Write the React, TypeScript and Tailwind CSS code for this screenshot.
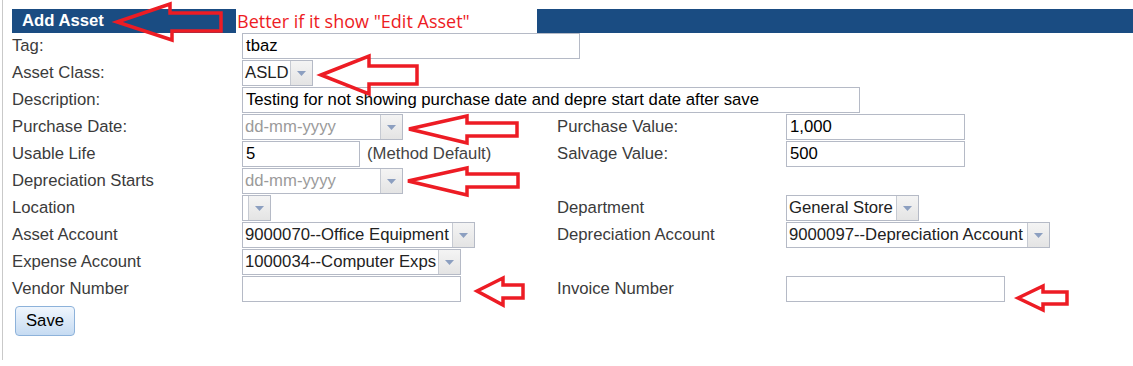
import type { ReactNode } from 'react';

const font = { fontFamily: '"Liberation Sans", Arial, sans-serif' };

function Label({ children }: { children: ReactNode }) {
  return <div className="text-[16.7px] leading-[25px] text-[#3b3b3b]">{children}</div>;
}

function TextBox({ w, value }: { w: string; value?: string }) {
  return (
    <div className={`${w} h-[26px] border border-[#b5bac6] bg-white px-[3px] text-[16.7px] leading-[24px] text-black whitespace-nowrap overflow-hidden`}>
      {value}
    </div>
  );
}

function Caret() {
  return (
    <svg width="9" height="5" viewBox="0 0 9 5">
      <path d="M0 0 H9 L4.5 5 Z" fill="#8c9fc0" />
    </svg>
  );
}

function Select({ w, value, placeholder }: { w: string; value?: string; placeholder?: boolean }) {
  return (
    <div className={`${w} h-[26px] flex border border-[#b5bac6] bg-white`}>
      <div
        className={`flex-1 px-[2px] text-[16.7px] leading-[24px] whitespace-nowrap overflow-hidden ${
          placeholder ? 'text-[#9a9a9a]' : 'text-[#222]'
        }`}
      >
        {value}
      </div>
      <div className="w-[22px] flex items-center justify-center border-l border-[#c6cad2] bg-gradient-to-b from-[#f4f4f4] to-[#e4e4e4]">
        <Caret />
      </div>
    </div>
  );
}

export default function App() {
  return (
    <div className="relative w-[1133px] h-[366px] bg-white overflow-hidden" style={font}>
      <div className="ml-[2px] h-[360px] border-l border-[#c9c9c9] pl-[9px] pt-[9px]">
        {/* header bar with annotation */}
        <div className="flex h-[24px]">
          <div className="w-[224px] bg-[#1a4c82] pl-[10px] text-[16.7px] font-bold leading-[24px] text-white">
            Add Asset
          </div>
          <div
            className="w-[301px] pl-[1px] text-[18px] leading-[24px] text-[#ed1c24]"
            style={{ fontFamily: '"Open Sans", "Liberation Sans", sans-serif' }}
          >
            Better if it show "Edit Asset"
          </div>
          <div className="flex-1 bg-[#1a4c82]" />
        </div>

        {/* form */}
        <div className="grid grid-cols-[230px_315px_229px_1fr] auto-rows-[27px]">
          <Label>Tag:</Label>
          <div className="col-span-3"><TextBox w="w-[338px]" value="tbaz" /></div>

          <Label>Asset Class:</Label>
          <div className="col-span-3"><Select w="w-[71px]" value="ASLD" /></div>

          <Label>Description:</Label>
          <div className="col-span-3">
            <TextBox w="w-[618px]" value="Testing for not showing purchase date and depre start date after save" />
          </div>

          <Label>Purchase Date:</Label>
          <Select w="w-[161px]" value="dd-mm-yyyy" placeholder />
          <Label>Purchase Value:</Label>
          <TextBox w="w-[179px]" value="1,000" />

          <Label>Usable Life</Label>
          <div className="flex">
            <TextBox w="w-[118px]" value="5" />
            <span className="pl-[7px] text-[16.7px] leading-[25px] text-[#444]">(Method Default)</span>
          </div>
          <Label>Salvage Value:</Label>
          <TextBox w="w-[179px]" value="500" />

          <Label>Depreciation Starts</Label>
          <Select w="w-[161px]" value="dd-mm-yyyy" placeholder />
          <div />
          <div />

          <Label>Location</Label>
          <Select w="w-[29px]" />
          <Label>Department</Label>
          <Select w="w-[133px]" value="General Store" />

          <Label>Asset Account</Label>
          <Select w="w-[233px]" value="9000070--Office Equipment" />
          <Label>Depreciation Account</Label>
          <Select w="w-[264px]" value="9000097--Depreciation Account" />

          <Label>Expense Account</Label>
          <Select w="w-[219px]" value="1000034--Computer Exps" />
          <div />
          <div />

          <Label>Vendor Number</Label>
          <TextBox w="w-[219px]" />
          <Label>Invoice Number</Label>
          <TextBox w="w-[219px]" />
        </div>

        <button className="mt-[3px] ml-[3px] h-[30px] w-[60px] rounded-[4px] border border-[#8db2da] bg-gradient-to-b from-[#f0f6fd] to-[#c6dbf2] text-[16.7px] text-black">
          Save
        </button>
      </div>

      {/* red annotation arrows */}
      <svg className="pointer-events-none absolute inset-0" width="1133" height="366" viewBox="0 0 1133 366">
        <g fill="none" stroke="#ed1c24" strokeWidth="3.5" strokeLinejoin="miter">
          <polygon points="117,22 170,4 170,13 221,13 221,31 172,31 172,40" />
          <polygon points="321,75 369,56 369,66 417,66 417,84 369,84 369,94" />
          <polygon points="409,129 467,116 467,123 517,123 517,136 467,136 467,143" />
          <polygon points="408,181 467,168 467,174 518,174 518,187 467,187 467,195" />
          <polygon points="477,291 503,278 503,285 523,285 523,298 503,298 503,305" />
          <polygon points="1018,298 1043,286 1043,292 1067,292 1067,304 1043,304 1043,310" />
        </g>
      </svg>
    </div>
  );
}
